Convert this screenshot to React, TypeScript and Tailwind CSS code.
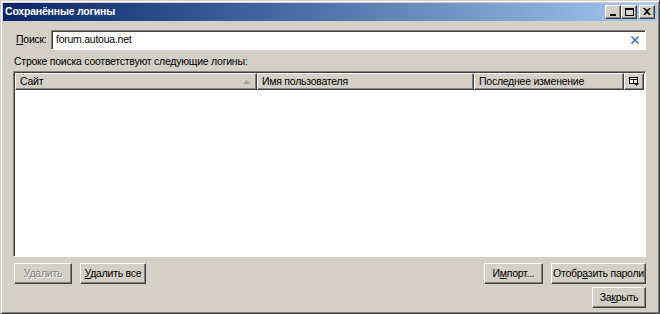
import React from "react";

const raised =
  "border border-t-white border-l-white border-r-[#404040] border-b-[#404040] shadow-[inset_-1px_-1px_#808080]";

const Btn = ({
  children,
  w,
  disabled = false,
}: {
  children: React.ReactNode;
  w: string;
  disabled?: boolean;
}) => (
  <button
    type="button"
    className={`${w} h-[21px] bg-[#d4d0c8] leading-none whitespace-nowrap flex items-center justify-center ${raised} ${
      disabled ? "text-[#808080] [text-shadow:1px_1px_#ffffff]" : "text-black"
    }`}
  >
    {children}
  </button>
);

const CaptionBtn = ({ children }: { children: React.ReactNode }) => (
  <div
    className={`w-[16px] h-[14px] bg-[#d4d0c8] flex items-center justify-center ${raised}`}
  >
    {children}
  </div>
);

export default function App() {
  return (
    <div
      className="w-[660px] h-[314px] bg-[#d4d0c8] flex flex-col border border-t-[#d4d0c8] border-l-[#d4d0c8] border-r-[#404040] border-b-[#404040] shadow-[inset_1px_1px_#ffffff,inset_-1px_-1px_#808080] p-[2px] select-none"
      style={{ fontFamily: '"Liberation Sans", Arial, sans-serif' }}
    >
      {/* Title bar */}
      <div className="h-[18px] bg-linear-to-r from-[#0a246a] to-[#a6caf0] flex items-center pl-[2px] pr-[2px]">
        <span className="text-white font-bold text-[10.5px] tracking-[-0.2px]">
          Сохранённые логины
        </span>
        <div className="ml-auto flex items-center">
          <CaptionBtn>
            <div className="w-[6px] h-[2px] bg-black mt-[6px] -ml-[1px]" />
          </CaptionBtn>
          <CaptionBtn>
            <div className="w-[9px] h-[8px] border border-black border-t-2 -mt-[1px]" />
          </CaptionBtn>
          <div className="w-[2px]" />
          <CaptionBtn>
            <svg width="8" height="7" viewBox="0 0 8 7" className="-mt-[1px]">
              <path d="M0 0h2l2 2 2-2h2L5 3.5 8 7H6L4 5 2 7H0l3-3.5z" fill="#000" />
            </svg>
          </CaptionBtn>
        </div>
      </div>

      {/* Body */}
      <div className="flex-1 flex flex-col pl-[10px] pr-[11px] pt-[9px] text-[10.5px] tracking-[-0.25px] text-black">
        <div className="flex items-center h-[20px]">
          <span className="w-[38px] pl-[3px]">
            <span className="underline">П</span>оиск:
          </span>
          <div className="flex-1 h-[20px] bg-white flex items-center border border-t-[#808080] border-l-[#808080] border-r-white border-b-white shadow-[inset_1px_1px_#404040] pl-[4px] pr-[4px]">
            <span>forum.autoua.net</span>
            <svg width="10" height="10" viewBox="0 0 10 10" className="ml-auto mr-[1px]">
              <path d="M1.5 1.5l7 7M8.5 1.5l-7 7" stroke="#3d6fc1" strokeWidth="1.6" />
            </svg>
          </div>
        </div>

        <div className="mt-[3px] h-[17px] flex items-center pl-[1px]">
          Строке поиска соответствуют следующие логины:
        </div>

        <div className="mt-[1px] h-[186px] bg-white flex flex-col border border-t-[#808080] border-l-[#808080] border-r-white border-b-white shadow-[inset_1px_1px_#404040] p-[1px]">
          <div className="h-[17px] flex">
            <div className={`w-[242px] flex items-center pl-[4px] pr-[6px] bg-[#d4d0c8] ${raised}`}>
              <span>Сайт</span>
              <svg width="7" height="4" viewBox="0 0 7 4" className="ml-auto">
                <path d="M3.5 0L7 4H0z" fill="#a8a49c" />
              </svg>
            </div>
            <div className={`w-[217px] flex items-center pl-[4px] bg-[#d4d0c8] ${raised}`}>
              Имя пользователя
            </div>
            <div className={`flex-1 flex items-center pl-[4px] bg-[#d4d0c8] ${raised}`}>
              Последнее изменение
            </div>
            <div className={`w-[20px] flex items-center justify-center bg-[#d4d0c8] ${raised}`}>
              <svg width="10" height="9" viewBox="0 0 10 9">
                <rect x="0.5" y="0.5" width="8" height="6" fill="#fff" stroke="#000" />
                <path d="M0.5 2.5h8M4.5 2.5v4" stroke="#000" />
                <path d="M5 6h5L7.5 9z" fill="#000" />
              </svg>
            </div>
          </div>
          <div className="flex-1" />
        </div>

        <div className="mt-[6px] flex items-center h-[21px] pl-[1px]">
          <Btn w="w-[58px]" disabled>
            Удалить
          </Btn>
          <div className="w-[8px]" />
          <Btn w="w-[66px]">
            <span>
              <span className="underline">У</span>далить все
            </span>
          </Btn>
          <div className="ml-auto flex items-center gap-[8px]">
            <Btn w="w-[59px]">
              <span>
                И<span className="underline">м</span>порт...
              </span>
            </Btn>
            <Btn w="w-[95px]">
              <span>
                Отобр<span className="underline">а</span>зить пароли
              </span>
            </Btn>
          </div>
        </div>

        <div className="mt-[3px] flex h-[21px]">
          <div className="ml-auto">
            <Btn w="w-[54px]">
              <span>
                За<span className="underline">к</span>рыть
              </span>
            </Btn>
          </div>
        </div>
      </div>
    </div>
  );
}
